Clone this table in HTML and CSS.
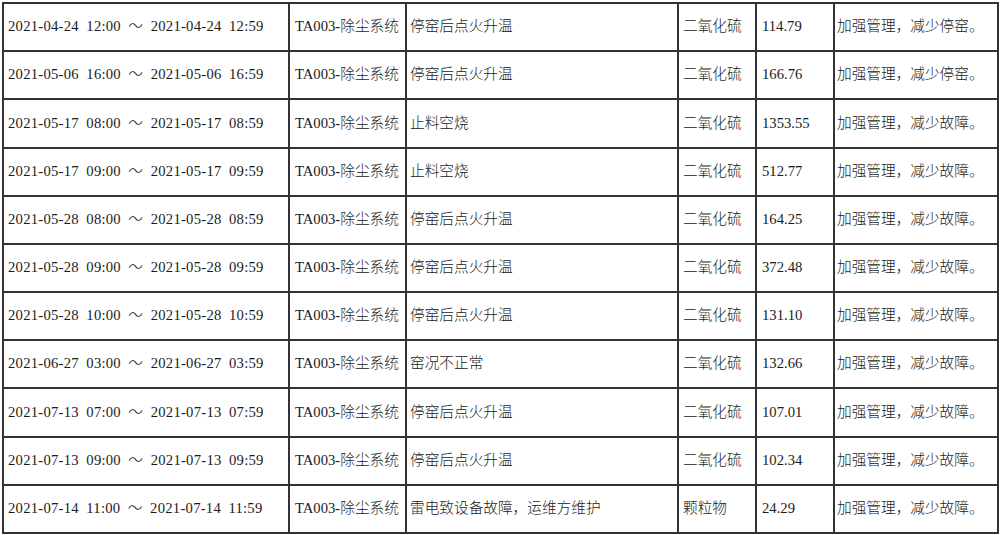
FILE: index.html
```html
<!DOCTYPE html>
<html lang="zh-CN">
<head>
<meta charset="utf-8">
<title>异常记录</title>
<link rel="stylesheet" href="styles.css">
</head>
<body>
<table class="records">
  <colgroup>
    <col class="c-time"><col class="c-sys"><col class="c-reason"><col class="c-pol"><col class="c-val"><col class="c-act">
  </colgroup>
  <tbody>
    <tr><td class="time">2021-04-24 12:00 ～ 2021-04-24 12:59</td><td class="sys">TA003-除尘系统</td><td class="reason">停窑后点火升温</td><td class="pol">二氧化硫</td><td class="val">114.79</td><td class="act">加强管理，减少停窑。</td></tr>
    <tr><td class="time">2021-05-06 16:00 ～ 2021-05-06 16:59</td><td class="sys">TA003-除尘系统</td><td class="reason">停窑后点火升温</td><td class="pol">二氧化硫</td><td class="val">166.76</td><td class="act">加强管理，减少停窑。</td></tr>
    <tr><td class="time">2021-05-17 08:00 ～ 2021-05-17 08:59</td><td class="sys">TA003-除尘系统</td><td class="reason">止料空烧</td><td class="pol">二氧化硫</td><td class="val">1353.55</td><td class="act">加强管理，减少故障。</td></tr>
    <tr><td class="time">2021-05-17 09:00 ～ 2021-05-17 09:59</td><td class="sys">TA003-除尘系统</td><td class="reason">止料空烧</td><td class="pol">二氧化硫</td><td class="val">512.77</td><td class="act">加强管理，减少故障。</td></tr>
    <tr><td class="time">2021-05-28 08:00 ～ 2021-05-28 08:59</td><td class="sys">TA003-除尘系统</td><td class="reason">停窑后点火升温</td><td class="pol">二氧化硫</td><td class="val">164.25</td><td class="act">加强管理，减少故障。</td></tr>
    <tr><td class="time">2021-05-28 09:00 ～ 2021-05-28 09:59</td><td class="sys">TA003-除尘系统</td><td class="reason">停窑后点火升温</td><td class="pol">二氧化硫</td><td class="val">372.48</td><td class="act">加强管理，减少故障。</td></tr>
    <tr><td class="time">2021-05-28 10:00 ～ 2021-05-28 10:59</td><td class="sys">TA003-除尘系统</td><td class="reason">停窑后点火升温</td><td class="pol">二氧化硫</td><td class="val">131.10</td><td class="act">加强管理，减少故障。</td></tr>
    <tr><td class="time">2021-06-27 03:00 ～ 2021-06-27 03:59</td><td class="sys">TA003-除尘系统</td><td class="reason">窑况不正常</td><td class="pol">二氧化硫</td><td class="val">132.66</td><td class="act">加强管理，减少故障。</td></tr>
    <tr><td class="time">2021-07-13 07:00 ～ 2021-07-13 07:59</td><td class="sys">TA003-除尘系统</td><td class="reason">停窑后点火升温</td><td class="pol">二氧化硫</td><td class="val">107.01</td><td class="act">加强管理，减少故障。</td></tr>
    <tr><td class="time">2021-07-13 09:00 ～ 2021-07-13 09:59</td><td class="sys">TA003-除尘系统</td><td class="reason">停窑后点火升温</td><td class="pol">二氧化硫</td><td class="val">102.34</td><td class="act">加强管理，减少故障。</td></tr>
    <tr><td class="time">2021-07-14 11:00 ～ 2021-07-14 11:59</td><td class="sys">TA003-除尘系统</td><td class="reason">雷电致设备故障，运维方维护</td><td class="pol">颗粒物</td><td class="val">24.29</td><td class="act">加强管理，减少故障。</td></tr>
  </tbody>
</table>
</body>
</html>
```

FILE: styles.css
```css
html, body {
  margin: 0;
  padding: 0;
  background: #ffffff;
}

body {
  padding: 2px 0 0 2px;
}

.records {
  table-layout: fixed;
  width: 997px;
  height: 532px;
  border-collapse: separate;
  border-spacing: 2px;
  background: #333333;
  font-family: "Liberation Serif", "Noto Sans CJK SC", serif;
  font-size: 14.67px;
  font-weight: 300;
  color: #1a1a1a;
}

.c-time { width: 284px; }
.c-sys { width: 115px; }
.c-reason { width: 270px; }
.c-pol { width: 76px; }
.c-val { width: 76px; }
.c-act { width: 162px; }

.records td {
  background: #ffffff;
  padding: 0 0 0 4px;
  vertical-align: middle;
  white-space: nowrap;
  overflow: hidden;
  line-height: 1.2;
}

.records td.time {
  padding-left: 4px;
  word-spacing: 3.5px;
  letter-spacing: 0.25px;
}

.records td.sys { padding-left: 5px; }
.records td.reason { padding-left: 3px; }
.records td.pol { padding-left: 4px; }
.records td.val { padding-left: 5px; }
.records td.act { padding-left: 2px; }
```
